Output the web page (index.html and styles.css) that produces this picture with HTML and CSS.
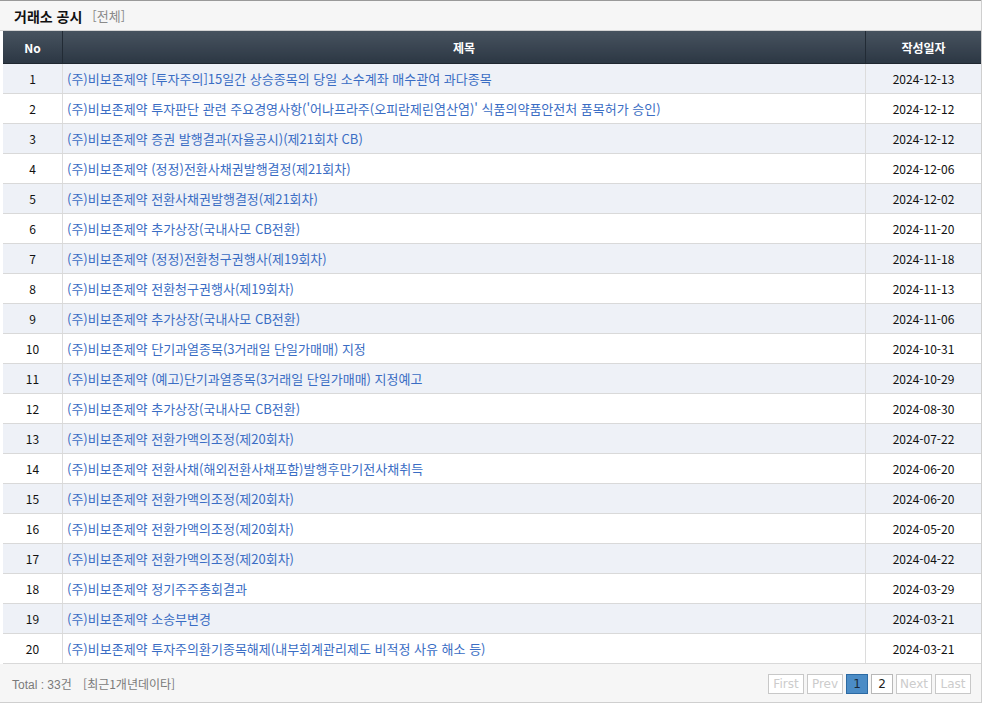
FILE: index.html
```html
<!DOCTYPE html>
<html lang="ko">
<head>
<meta charset="utf-8">
<link rel="stylesheet" href="styles.css">
</head>
<body>
<div class="board">
  <div class="board-title">
    <span class="title">거래소 공시</span>
    <span class="scope">[전체]</span>
  </div>
  <table class="list">
    <thead>
      <tr><th class="c-no">No</th><th class="c-subj">제목</th><th class="c-date">작성일자</th></tr>
    </thead>
    <tbody>
      <tr><td class="c-no">1</td><td class="c-subj"><a>(주)비보존제약 [투자주의]15일간 상승종목의 당일 소수계좌 매수관여 과다종목</a></td><td class="c-date">2024-12-13</td></tr>
      <tr><td class="c-no">2</td><td class="c-subj"><a>(주)비보존제약 투자판단 관련 주요경영사항('어나프라주(오피란제린염산염)' 식품의약품안전처 품목허가 승인)</a></td><td class="c-date">2024-12-12</td></tr>
      <tr><td class="c-no">3</td><td class="c-subj"><a>(주)비보존제약 증권 발행결과(자율공시)(제21회차 CB)</a></td><td class="c-date">2024-12-12</td></tr>
      <tr><td class="c-no">4</td><td class="c-subj"><a>(주)비보존제약 (정정)전환사채권발행결정(제21회차)</a></td><td class="c-date">2024-12-06</td></tr>
      <tr><td class="c-no">5</td><td class="c-subj"><a>(주)비보존제약 전환사채권발행결정(제21회차)</a></td><td class="c-date">2024-12-02</td></tr>
      <tr><td class="c-no">6</td><td class="c-subj"><a>(주)비보존제약 추가상장(국내사모 CB전환)</a></td><td class="c-date">2024-11-20</td></tr>
      <tr><td class="c-no">7</td><td class="c-subj"><a>(주)비보존제약 (정정)전환청구권행사(제19회차)</a></td><td class="c-date">2024-11-18</td></tr>
      <tr><td class="c-no">8</td><td class="c-subj"><a>(주)비보존제약 전환청구권행사(제19회차)</a></td><td class="c-date">2024-11-13</td></tr>
      <tr><td class="c-no">9</td><td class="c-subj"><a>(주)비보존제약 추가상장(국내사모 CB전환)</a></td><td class="c-date">2024-11-06</td></tr>
      <tr><td class="c-no">10</td><td class="c-subj"><a>(주)비보존제약 단기과열종목(3거래일 단일가매매) 지정</a></td><td class="c-date">2024-10-31</td></tr>
      <tr><td class="c-no">11</td><td class="c-subj"><a>(주)비보존제약 (예고)단기과열종목(3거래일 단일가매매) 지정예고</a></td><td class="c-date">2024-10-29</td></tr>
      <tr><td class="c-no">12</td><td class="c-subj"><a>(주)비보존제약 추가상장(국내사모 CB전환)</a></td><td class="c-date">2024-08-30</td></tr>
      <tr><td class="c-no">13</td><td class="c-subj"><a>(주)비보존제약 전환가액의조정(제20회차)</a></td><td class="c-date">2024-07-22</td></tr>
      <tr><td class="c-no">14</td><td class="c-subj"><a>(주)비보존제약 전환사채(해외전환사채포함)발행후만기전사채취득</a></td><td class="c-date">2024-06-20</td></tr>
      <tr><td class="c-no">15</td><td class="c-subj"><a>(주)비보존제약 전환가액의조정(제20회차)</a></td><td class="c-date">2024-06-20</td></tr>
      <tr><td class="c-no">16</td><td class="c-subj"><a>(주)비보존제약 전환가액의조정(제20회차)</a></td><td class="c-date">2024-05-20</td></tr>
      <tr><td class="c-no">17</td><td class="c-subj"><a>(주)비보존제약 전환가액의조정(제20회차)</a></td><td class="c-date">2024-04-22</td></tr>
      <tr><td class="c-no">18</td><td class="c-subj"><a>(주)비보존제약 정기주주총회결과</a></td><td class="c-date">2024-03-29</td></tr>
      <tr><td class="c-no">19</td><td class="c-subj"><a>(주)비보존제약 소송부변경</a></td><td class="c-date">2024-03-21</td></tr>
      <tr><td class="c-no">20</td><td class="c-subj"><a>(주)비보존제약 투자주의환기종목해제(내부회계관리제도 비적정 사유 해소 등)</a></td><td class="c-date">2024-03-21</td></tr>
    </tbody>
  </table>
  <div class="board-foot">
    <div class="total">Total : 33건 <span class="range">[최근1개년데이타]</span></div>
    <div class="pager">
      <span class="pg off">First</span>
      <span class="pg off">Prev</span>
      <span class="pg num cur">1</span>
      <span class="pg num">2</span>
      <span class="pg off">Next</span>
      <span class="pg off">Last</span>
    </div>
  </div>
</div>
</body>
</html>
```

FILE: styles.css
```css
html, body {
  margin: 0;
  padding: 0;
  background: #ffffff;
}
body {
  font-family: Tahoma, "DejaVu Sans", "Noto Sans CJK KR", sans-serif;
  font-size: 12px;
  color: #222;
}
.board {
  width: 982px;
  border-right: 1px solid #cfcfcf;
  box-sizing: border-box;
}
.board-title {
  height: 31px;
  box-sizing: border-box;
  border-top: 1px solid #9a9a9a;
  border-bottom: 1px solid #d4d4d4;
  background: #f6f6f6;
  display: flex;
  align-items: center;
  padding: 0 0 0 14px;
}
.title {
  font-family: "Noto Sans CJK KR", sans-serif;
  font-weight: bold;
  font-size: 14px;
  color: #111;
}
.scope {
  margin-left: 10px;
  font-family: "Noto Sans CJK KR", sans-serif;
  font-size: 13px;
  color: #8a8a8a;
}
.list {
  margin-left: 3px;
  width: 978px;
  border-collapse: collapse;
  table-layout: fixed;
}
.list th {
  height: 32px;
  padding: 0;
  background: linear-gradient(#47535f, #2c3744);
  color: #fff;
  font-family: "Noto Sans CJK KR", sans-serif;
  font-weight: bold;
  font-size: 12px;
  border-left: 1px solid #5a6673;
  border-right: 1px solid #222b35;
  border-bottom: 1px solid #1f2730;
}
.list th:first-child { border-left: none; }
.list th:last-child { border-right: none; }
.c-no { width: 59px; text-align: center; }
.c-date { width: 115px; text-align: center; }
.list td {
  height: 29px;
  padding: 0;
  border-bottom: 1px solid #d9d9d9;
  font-family: "Noto Sans CJK KR", sans-serif;
  font-size: 12px;
  color: #111;
}
.list td.c-no { border-right: 1px solid #dcdcdc; }
.list td.c-subj { border-right: 1px solid #dcdcdc; padding-left: 4px; }
.list tbody tr:nth-child(odd) td { background: #eef1f7; }
.list tbody tr:nth-child(even) td { background: #ffffff; }
.list td a {
  font-size: 13px;
  color: #3a6dc4;
  text-decoration: none;
  white-space: nowrap;
}
.board-foot {
  height: 39px;
  box-sizing: border-box;
  background: #f6f6f6;
  border-bottom: 1px solid #cfcfcf;
  display: flex;
  align-items: center;
  justify-content: space-between;
  padding: 0 10px 0 12px;
}
.total {
  font-family: "Liberation Sans", "Noto Sans CJK KR", sans-serif;
  color: #7a7a7a;
  font-size: 12px;
}
.range {
  margin-left: 8px;
  font-family: "Noto Sans CJK KR", sans-serif;
}
.pager {
  display: flex;
  gap: 3px;
  margin-top: 2px;
}
.pg {
  height: 20px;
  box-sizing: border-box;
  border: 1px solid #c8c8c8;
  background: #fff;
  font-family: Tahoma, "DejaVu Sans", sans-serif;
  font-size: 12px;
  line-height: 18px;
  text-align: center;
  color: #ccc;
  width: 36px;
}
.pg.num {
  width: 22px;
  color: #222;
  border-color: #b8b8b8;
}
.pg.cur {
  background: #4b8cc6;
  border-color: #2c6aa3;
  color: #1a2a3a;
}
```
